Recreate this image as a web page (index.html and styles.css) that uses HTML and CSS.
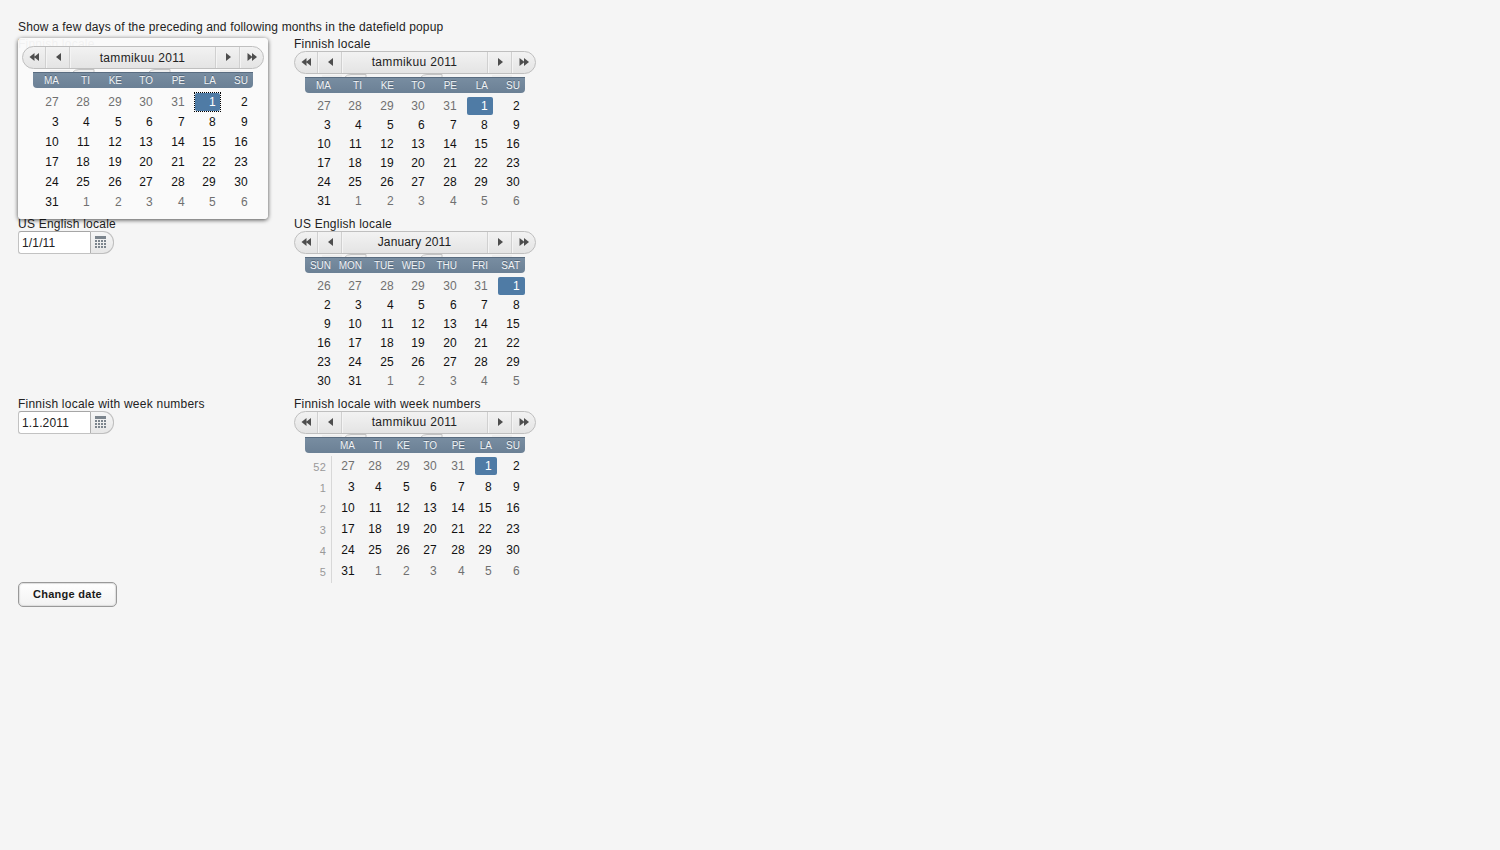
FILE: index.html
```html
<!DOCTYPE html>
<html lang="en">
<head>
<meta charset="utf-8">
<title>Date fields</title>
<link rel="stylesheet" href="styles.css">
</head>
<body>
<div class="page">
  <div class="description">Show a few days of the preceding and following months in the datefield popup</div>
  <div class="fields" id="fields"></div>
  <button class="button">Change date</button>
</div>
<script src="main.js"></script>
</body>
</html>
```
FILE: styles.css
```css
body {
  margin: 0;
  background: #f5f5f5;
  color: #222;
  font: 12px/17px "Liberation Sans", Arial, sans-serif;
}
.page { padding: 18px; }
.description { height: 18px; line-height: 18px; letter-spacing: .145px; white-space: nowrap; }
.fields {
  display: grid;
  grid-template-columns: 276px 242px;
  grid-template-rows: 180px 180px 186px;
}
.field { position: relative; }
.caption { height: 15px; line-height: 17px; letter-spacing: .23px; white-space: nowrap; }
.datefield { display: flex; height: 23px; }
.datefield-input {
  box-sizing: border-box;
  width: 72px;
  height: 23px;
  margin: 0;
  padding: 0 3px;
  border: 1px solid #c2c2c2;
  border-top-color: #a6a6a6;
  border-right: 0;
  border-radius: 3px 0 0 3px;
  background: #fff;
  color: #222;
  font: inherit;
  letter-spacing: .15px;
  outline: 0;
}
.datefield-button {
  box-sizing: border-box;
  width: 24px;
  height: 23px;
  padding: 3px 0 0 4px;
  border: 1px solid #bfbfbf;
  border-left-color: #b0b0b0;
  border-radius: 0 11px 11px 0;
  background: linear-gradient(#f6f6f6, #e7e7e7);
}
.datefield-button svg, .nav svg { display: block; }
.popup {
  position: absolute;
  z-index: 2;
  left: 0;
  top: 2px;
  box-sizing: border-box;
  width: 250px;
  height: 181px;
  padding: 8px 4px;
  border-radius: 4px;
  background: rgba(250, 250, 250, .96);
  box-shadow: 0 1px 4px rgba(0, 0, 0, .7);
}
.calendar { width: 242px; }
.nav {
  box-sizing: border-box;
  display: grid;
  grid-template-columns: 22px 24px 1fr 24px 24px;
  height: 23px;
  border: 1px solid #bfbfbf;
  border-radius: 12px;
  background: linear-gradient(#f2f2f2, #e4e4e4);
}
.nav > span { display: flex; align-items: center; justify-content: center; }
.nav > span + span { border-left: 1px solid #d0d0d0; box-shadow: inset 1px 0 #f4f4f4; }
.nav .month { line-height: 21px; letter-spacing: .35px; }
.nav .month.tight { letter-spacing: .15px; }
.popup .month { padding-top: 1px; line-height: 20px; }
.edges { display: block; height: 3px; }
.row {
  display: grid;
  grid-template-columns: 31px 31px 32px 31px 32px 31px 32px;
  height: var(--pitch);
}
.days { margin: 0 11px; }
.weeks .row { grid-template-columns: 27px 28px 27px 28px 27px 28px 27px 28px; }
.head.row {
  height: 16px;
  margin-bottom: 3px;
  border-radius: 0 0 4px 4px;
  background: linear-gradient(#596c80 0, #596c80 1px, #788da1 1px, #6b8095);
  color: #f0f3f6;
  font-size: 10px;
  line-height: 17px;
  text-shadow: 0 -1px rgba(50, 65, 80, .5);
}
.head span { padding-right: 5px; text-align: right; }
.popup .body { padding-top: 1px; }
.weeks .body .day { height: 19px; }
.day { display: flex; align-items: center; color: #111; text-align: right; }
.day b {
  position: relative;
  flex: 1;
  height: 18px;
  margin-left: 5px;
  padding-right: 5px;
  border-radius: 2px;
  font-weight: normal;
  letter-spacing: .25px;
  line-height: 18px;
}
.day.off { color: #707070; }
.selected b { background: #4f7ba5; color: #fff; }
.popup .selected b { margin-right: 1px; padding-right: 4px; }
.popup .selected b::after {
  content: "";
  position: absolute;
  inset: -1px;
  border: 1px dotted #000;
}
.week {
  box-sizing: border-box;
  padding-right: 5px;
  border-right: 1px solid #d8d8d8;
  color: #999;
  font-size: 11px;
  letter-spacing: .2px;
  line-height: 22px;
  text-align: right;
}
.button {
  display: block;
  box-sizing: border-box;
  width: 99px;
  height: 25px;
  margin: 0;
  padding: 0 0 2px;
  border: 1px solid #999;
  border-radius: 5px;
  background: linear-gradient(#fff, #f2f2f2);
  box-shadow: inset 0 0 1px 1px #ddd;
  color: #1a1a1a;
  font: bold 11px "Liberation Sans", Arial, sans-serif;
  letter-spacing: .27px;
}
```
FILE: main.js
```js
const fi = ['MA', 'TI', 'KE', 'TO', 'PE', 'LA', 'SU'];
const us = ['SUN', 'MON', 'TUE', 'WED', 'THU', 'FRI', 'SAT'];

const arrow = d => `<svg width="12" height="11"><path d="${d}" fill="#4d4d4d"/></svg>`;
const icons = {
  first: arrow('M6.5 1v8L1.5 5zM11 1v8L6 5z'),
  prev: arrow('M9 1v8L4 5z'),
  next: arrow('M4 1v8l5-4z'),
  last: arrow('M1.5 1v8l5-4zM6 1v8l5-4z')
};

function calendar(title, names, first, pitch, weeks) {
  let rows = '';
  for (let r = 0; r < 6; r++) {
    rows += '<div class="row">';
    if (weeks) rows += `<span class="week">${r ? r : 52}</span>`;
    for (let c = 0; c < 7; c++) {
      const n = first - 31 + r * 7 + c;
      const day = n < 1 ? n + 31 : n > 31 ? n - 31 : n;
      const kind = n === 1 ? ' selected' : n < 1 || n > 31 ? ' off' : '';
      rows += `<span class="day${kind}"><b>${day}</b></span>`;
    }
    rows += '</div>';
  }
  return `<div class="calendar${weeks ? ' weeks' : ''}" style="--pitch:${pitch}px">
    <div class="nav"><span>${icons.first}</span><span>${icons.prev}</span><span class="month${names === us ? ' tight' : ''}">${title}</span><span>${icons.next}</span><span>${icons.last}</span></div>
    <svg class="edges" width="242" height="3"><path d="M28 1h20v2H28zM198 1h20v2h-20z" fill="#ededed"/><path d="M51 3q2-2.5 6-2.5h15V3M127 3q2-2.5 6-2.5h15V3" fill="#eee" stroke="#c4c4c4"/></svg>
    <div class="days"><div class="row head">${weeks ? '<span></span>' : ''}${names.map(n => `<span>${n}</span>`).join('')}</div><div class="body">${rows}</div></div>
  </div>`;
}

const picker = `<span class="datefield-button"><svg width="12" height="15"><path d="M0 1h11v3H0z" fill="#7c858d"/><path d="M0 6h12M0 9h12M0 12h12" stroke="#7c858d" stroke-width="2" stroke-dasharray="2 1"/></svg></span>`;
const field = (caption, value) => `<div class="field"><div class="caption">${caption}</div><div class="datefield"><input class="datefield-input" value="${value}">${picker}</div></div>`;
const inline = (caption, cal) => `<div class="field"><div class="caption">${caption}</div>${cal}</div>`;

document.getElementById('fields').innerHTML =
  `<div class="field"><div class="caption">Finnish locale</div><div class="popup">${calendar('tammikuu 2011', fi, 27, 20)}</div></div>` +
  inline('Finnish locale', calendar('tammikuu 2011', fi, 27, 19)) +
  field('US English locale', '1/1/11') +
  inline('US English locale', calendar('January 2011', us, 26, 19)) +
  field('Finnish locale with week numbers', '1.1.2011') +
  inline('Finnish locale with week numbers', calendar('tammikuu 2011', fi, 27, 21, true));
```
